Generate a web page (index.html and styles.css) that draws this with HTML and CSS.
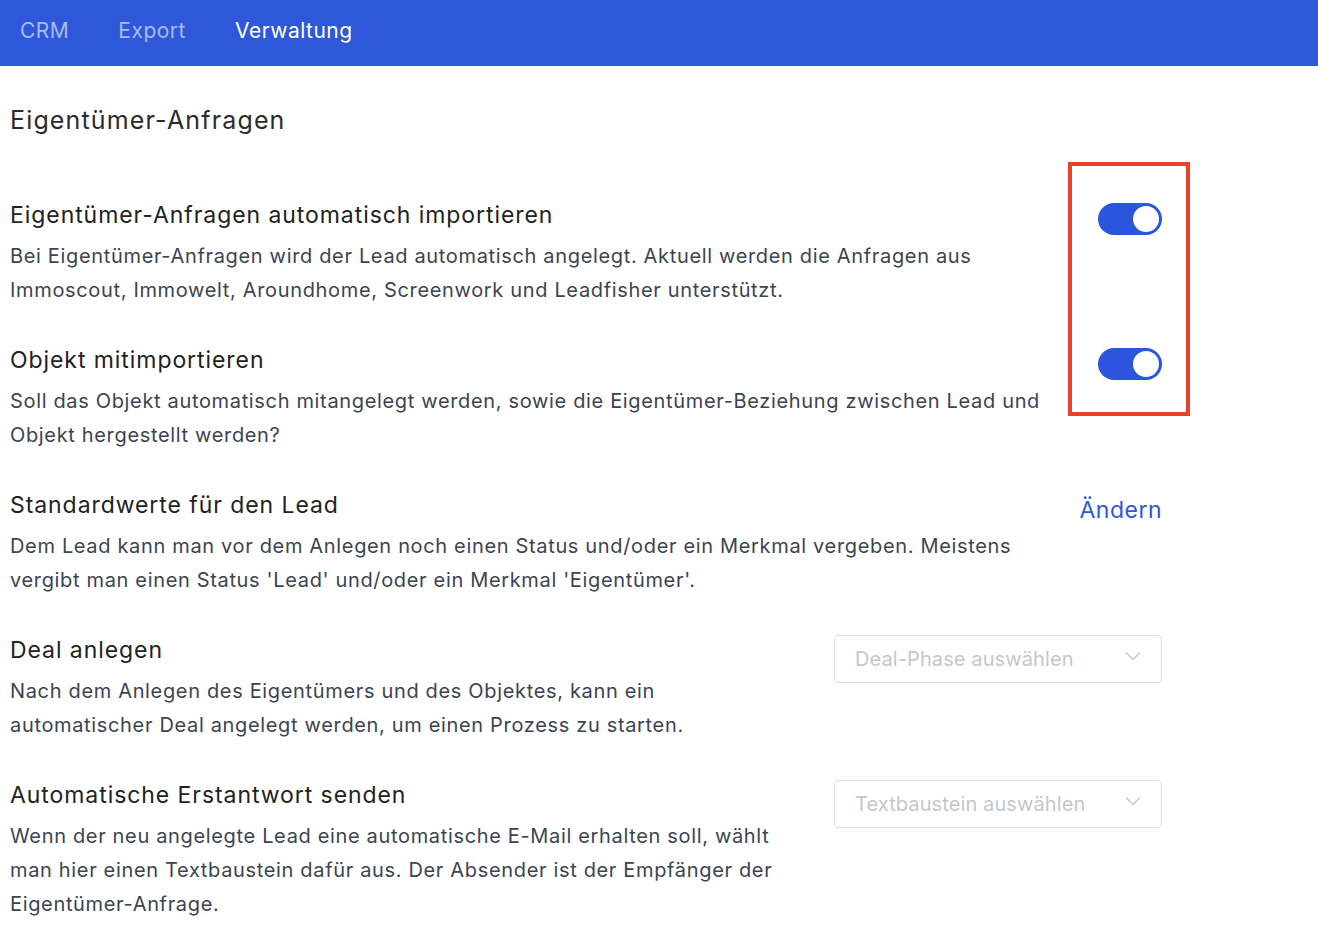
FILE: index.html
```html
<!DOCTYPE html>
<html lang="de">
<head>
    <meta charset="UTF-8">
    <meta name="viewport" content="width=device-width, initial-scale=1.0">
    <title>Verwaltung - Eigentümer-Anfragen</title>
    <link rel="stylesheet" href="styles.css">
</head>
<body>
    <nav class="topnav">
        <a href="#" class="nav-item">CRM</a>
        <a href="#" class="nav-item">Export</a>
        <a href="#" class="nav-item active">Verwaltung</a>
    </nav>

    <main class="settings">
        <h1 class="page-title">Eigentümer-Anfragen</h1>

        <div class="highlight"></div>

        <div class="setting-row">
            <div class="setting-text">
                <h3>Eigentümer-Anfragen automatisch importieren</h3>
                <p>Bei Eigentümer-Anfragen wird der Lead automatisch angelegt. Aktuell werden die Anfragen aus Immoscout, Immowelt, Aroundhome, Screenwork und Leadfisher unterstützt.</p>
            </div>
            <label class="switch">
                <input type="checkbox" checked>
                <span class="slider"></span>
            </label>
        </div>

        <div class="setting-row">
            <div class="setting-text">
                <h3>Objekt mitimportieren</h3>
                <p>Soll das Objekt automatisch mitangelegt werden, sowie die Eigentümer-Beziehung zwischen Lead und Objekt hergestellt werden?</p>
            </div>
            <label class="switch">
                <input type="checkbox" checked>
                <span class="slider"></span>
            </label>
        </div>

        <div class="setting-row">
            <div class="setting-text">
                <h3>Standardwerte für den Lead</h3>
                <p>Dem Lead kann man vor dem Anlegen noch einen Status und/oder ein Merkmal vergeben. Meistens vergibt man einen Status 'Lead' und/oder ein Merkmal 'Eigentümer'.</p>
            </div>
            <a href="#" class="edit-link">Ändern</a>
        </div>

        <div class="setting-row">
            <div class="setting-text">
                <h3>Deal anlegen</h3>
                <p>Nach dem Anlegen des Eigentümers und des Objektes, kann ein automatischer Deal angelegt werden, um einen Prozess zu starten.</p>
            </div>
            <div class="select">
                <span>Deal-Phase auswählen</span>
                <svg class="chevron" width="16" height="10" viewBox="0 0 16 10"><path d="M1 1.5l7 7 7-7" fill="none" stroke="#c3c7cf" stroke-width="1.3"/></svg>
            </div>
        </div>

        <div class="setting-row">
            <div class="setting-text">
                <h3>Automatische Erstantwort senden</h3>
                <p>Wenn der neu angelegte Lead eine automatische E-Mail erhalten soll, wählt man hier einen Textbaustein dafür aus. Der Absender ist der Empfänger der Eigentümer-Anfrage.</p>
            </div>
            <div class="select">
                <span>Textbaustein auswählen</span>
                <svg class="chevron" width="16" height="10" viewBox="0 0 16 10"><path d="M1 1.5l7 7 7-7" fill="none" stroke="#c3c7cf" stroke-width="1.3"/></svg>
            </div>
        </div>
    </main>
</body>
</html>
```

FILE: styles.css
```css
body {
    font-family: Inter, "Noto Sans", sans-serif;
    margin: 0;
    background-color: #ffffff;
    color: #222;
}
.topnav {
    display: flex;
    align-items: center;
    gap: 49px;
    height: 66px;
    padding: 0 20px 5px;
    box-sizing: border-box;
    background-color: #2e57da;
}
.nav-item {
    font-size: 21px;
    letter-spacing: 0.5px;
    color: #a9bcf0;
    text-decoration: none;
}
.nav-item.active {
    color: #ffffff;
}
.settings {
    position: relative;
    padding: 38px 156px 40px 10px;
}
.page-title {
    font-size: 25px;
    font-weight: 400;
    letter-spacing: 1.15px;
    line-height: 32px;
    margin: 0 0 63px;
    color: #2b2b2b;
}
.highlight {
    position: absolute;
    left: 1068px;
    top: 96px;
    width: 114px;
    height: 246px;
    border: 4px solid #e8432a;
}
.setting-row {
    display: flex;
    align-items: flex-start;
    gap: 48px;
    margin-bottom: 37px;
}
.setting-text {
    flex: 1;
}
.setting-text h3 {
    font-size: 23px;
    font-weight: 400;
    letter-spacing: 0.93px;
    line-height: 32px;
    margin: 0 0 8px;
    color: #222;
}
.setting-text p {
    font-size: 20px;
    letter-spacing: 0.66px;
    line-height: 34px;
    margin: 0;
    color: #3b4452;
}
.switch {
    position: relative;
    display: block;
    width: 64px;
    height: 32px;
    margin-top: 4px;
    flex-shrink: 0;
}
.switch input {
    display: none;
}
.slider {
    position: absolute;
    inset: 0;
    border-radius: 16px;
    background-color: #d1d5db;
}
.slider::after {
    content: "";
    position: absolute;
    top: 3px;
    left: 3px;
    width: 26px;
    height: 26px;
    border-radius: 50%;
    background-color: #ffffff;
}
.switch input:checked + .slider {
    background-color: #2b55dc;
}
.switch input:checked + .slider::after {
    left: 35px;
}
.edit-link {
    font-size: 23px;
    letter-spacing: 0.5px;
    line-height: 32px;
    margin-top: 5px;
    color: #2e57da;
    text-decoration: none;
}
.select {
    display: flex;
    align-items: center;
    justify-content: space-between;
    width: 328px;
    height: 48px;
    padding: 0 20px;
    margin-top: 1px;
    box-sizing: border-box;
    border: 1px solid #dcdfe5;
    border-radius: 4px;
    font-size: 20px;
    letter-spacing: 0.1px;
    color: #c3c7cf;
    flex-shrink: 0;
}
.chevron {
    margin-top: -6px;
}
```
